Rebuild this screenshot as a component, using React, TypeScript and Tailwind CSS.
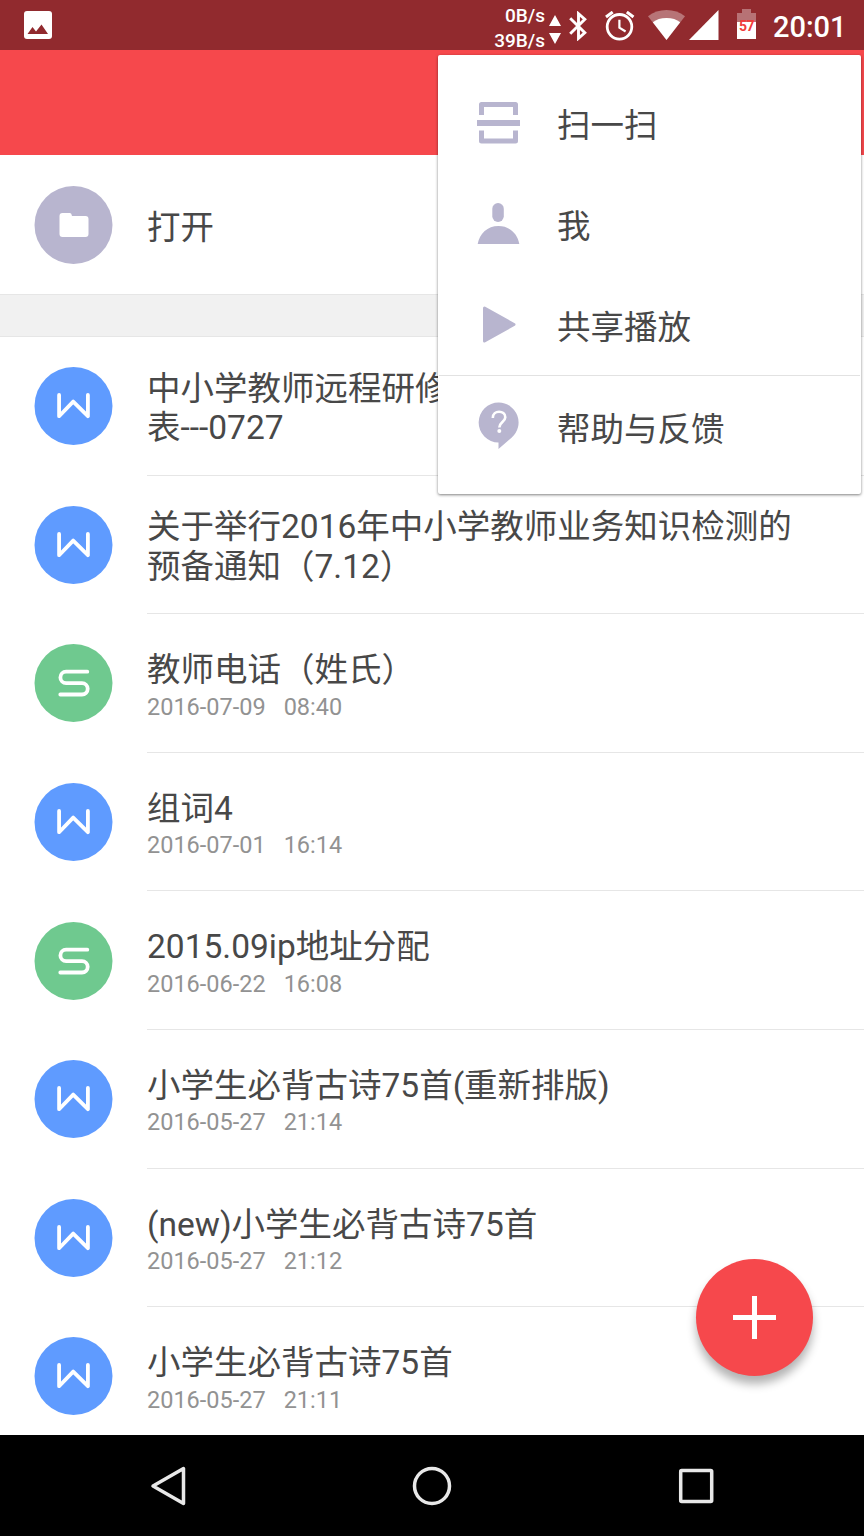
import React from "react";

type DocKind = "writer" | "sheet";

interface DocItem {
  kind: DocKind;
  title: string[];
  date?: string;
  time?: string;
}

const documents: DocItem[] = [
  { kind: "writer", title: ["中小学教师远程研修", "表---0727"] },
  {
    kind: "writer",
    title: ["关于举行2016年中小学教师业务知识检测的", "预备通知（7.12）"],
  },
  { kind: "sheet", title: ["教师电话（姓氏）"], date: "2016-07-09", time: "08:40" },
  { kind: "writer", title: ["组词4"], date: "2016-07-01", time: "16:14" },
  { kind: "sheet", title: ["2015.09ip地址分配"], date: "2016-06-22", time: "16:08" },
  { kind: "writer", title: ["小学生必背古诗75首(重新排版)"], date: "2016-05-27", time: "21:14" },
  { kind: "writer", title: ["(new)小学生必背古诗75首"], date: "2016-05-27", time: "21:12" },
  { kind: "writer", title: ["小学生必背古诗75首"], date: "2016-05-27", time: "21:11" },
];

const StatusBar: React.FC = () => (
  <div className="flex h-[50px] shrink-0 items-start bg-[#912a2e] text-white">
    <svg className="mt-[11px] ml-[24px] h-7 w-7" viewBox="0 0 28 28">
      <rect width="28" height="28" rx="3" fill="#fff" />
      <path d="M3.5 23 8.5 16l3.5 4.5 5.5-7L24 23z" fill="#912a2e" />
    </svg>
    <div className="ml-auto flex w-[60px] flex-col items-end pt-[3px] text-[19px] leading-[25px] font-medium">
      <span>0B/s</span>
      <span>39B/s</span>
    </div>
    <svg className="mt-[15px] ml-[4px] h-[29px] w-3" viewBox="0 0 12 29" fill="#fff">
      <path d="M0 11 6 0l6 11zM0 18h12L6 29z" />
    </svg>
    <svg className="mt-[11px] ml-[8px] h-[30px] w-[19px]" viewBox="0 0 19 30">
      <path
        d="M1.2 7.3 15.8 21.8 9.5 27.3V2.7l6.3 5.5L1.2 22.7"
        fill="none"
        stroke="#fff"
        strokeWidth="2.9"
      />
    </svg>
    <svg className="mt-[11px] ml-[17px] h-[30px] w-[30px]" viewBox="0 0 30 30" fill="none" stroke="#fff">
      <circle cx="14.5" cy="15.8" r="12.3" strokeWidth="2.8" />
      <path d="M1 6 7.7 1M28.5 6 21.8 1" strokeWidth="3" />
      <path d="M14.4 8.7v8l6.2 3.8" strokeWidth="2.2" />
    </svg>
    <svg className="mt-[10px] ml-[13px] h-[30px] w-[37px]" viewBox="0 0 37 30" fill="#fff">
      <path d="M18.5 30 0 6.3Q8 0 18.5 0T37 6.3z" opacity="0.35" />
      <path d="M18.5 30 4.8 12.3Q10 8 18.5 8t13.7 4.3z" />
    </svg>
    <svg className="mt-[10px] ml-[4px] h-[30px] w-[30px]" viewBox="0 0 30 30" fill="#fff">
      <path d="M0 30 29.5 0v30z" />
    </svg>
    <div className="mt-[9px] ml-[18px] flex w-[19px] flex-col items-center">
      <div className="h-[4px] w-[9px] bg-[#b77275]" />
      <div className="h-[9px] w-[19px] bg-[#b77275]" />
      <div className="flex h-[17px] w-[19px] justify-center bg-white text-[14px] leading-[8px] font-bold tracking-[-0.5px] text-[#f23c3c]">
        57
      </div>
    </div>
    <div className="mr-[18px] ml-[17px] w-[73px] text-right text-[29px] leading-[54px] font-medium whitespace-nowrap">
      20:01
    </div>
  </div>
);

const DocIcon: React.FC<{ kind: DocKind }> = ({ kind }) => (
  <svg
    className="ml-[34px] h-[78px] w-[79px] shrink-0"
    viewBox="-0.5 0 79 78"
    fill="none"
    stroke="#fff"
    strokeWidth="3.8"
    strokeLinecap="round"
    strokeLinejoin="round"
  >
    <circle cx="39" cy="39" r="39" fill={kind === "writer" ? "#5f9bff" : "#6fc98f"} stroke="none" />
    {kind === "writer" ? (
      <path d="M24.6 28V49.2L38.700 34.600 53.400 49.200V28" />
    ) : (
      <path d="M52.800 27.700H31.600a5.700 5.700 0 0 0 0 11.400H47.500a5.700 5.700 0 0 1 0 11.400H25.800" />
    )}
  </svg>
);

const DocRow: React.FC<{ doc: DocItem }> = ({ doc }) => (
  <li className="flex h-[138.6px] shrink-0 items-center">
    <DocIcon kind={doc.kind} />
    <div className="ml-[34px] flex h-full min-w-0 flex-1 flex-col justify-center border-b border-[#e6e6e6] pt-[5px]">
      {doc.title.map((line) => (
        <p key={line} className="text-[33.5px] leading-[39.4px] whitespace-nowrap">
          {line}
        </p>
      ))}
      {doc.date && (
        <p className="mt-[3px] flex gap-[18px] text-[23.5px] leading-7 text-[#929292]">
          <span>{doc.date}</span>
          <span>{doc.time}</span>
        </p>
      )}
    </div>
  </li>
);

const menuItems = [
  {
    label: "扫一扫",
    icon: (
      <g>
        <path d="M7.5 18V7.5h34V18M7.5 33.5V44h34V33.5" fill="none" stroke="#b8b5cf" strokeWidth="5" strokeLinejoin="round" />
        <path d="M3 23h43v6H3z" />
      </g>
    ),
  },
  {
    label: "我",
    icon: (
      <g>
        <rect x="18.3" y="5" width="11.5" height="19" rx="5.7" />
        <path d="M3.7 46C5.5 35.5 13.5 28 24.5 28S43.5 35.5 45.3 46z" />
      </g>
    ),
  },
  {
    label: "共享播放",
    icon: <path d="M10.5 9 40 25.5 10.5 42z" stroke="#b8b5cf" strokeWidth="3" strokeLinejoin="round" />,
  },
  {
    label: "帮助与反馈",
    icon: (
      <g>
        <path d="M24.8 2.500a20 20 0 0 1 13 35L24.500 49v-6.500A20 20 0 0 1 24.800 2.500z" />
        <path d="M18.800 18c0-8.500 12.500-8 12.500-.8 0 4.800-6 5-6 10.300" fill="none" stroke="#fff" strokeWidth="2.600" />
        <circle cx="25.300" cy="31" r="2" fill="#fff" />
      </g>
    ),
  },
];

const OverflowMenu: React.FC = () => (
  <div className="absolute top-[55px] left-[438px] h-[439px] w-[423px] rounded-[2px] bg-white pt-[17px] shadow-[0_1px_3px_rgba(0,0,0,0.5)]">
    {menuItems.map(({ label, icon }, i) => (
      <div
        key={label}
        className={`mx-px flex h-[101px] items-center ${i === 3 ? "border-t border-[#e2e2e2]" : ""}`}
      >
        <svg className="ml-[35px] h-[52px] w-[49px]" viewBox="0 0 49 52" fill="#b8b5cf">
          {icon}
        </svg>
        <span className="ml-[34px] pt-[7px] text-[33.5px] leading-[40px]">{label}</span>
      </div>
    ))}
  </div>
);

const NavBar: React.FC = () => (
  <div className="flex h-[101px] shrink-0 items-center justify-between bg-black px-[148px]">
    <svg className="h-[42px] w-[42px]" viewBox="0 0 42 42" fill="none" stroke="#e8e8e8" strokeWidth="3.5" strokeLinejoin="round">
      <path d="M5 21 35.5 3.5v35z" />
    </svg>
    <svg className="h-[42px] w-[42px]" viewBox="0 0 42 42" fill="none" stroke="#e8e8e8" strokeWidth="3.5">
      <circle cx="21" cy="21" r="17.5" />
    </svg>
    <svg className="h-[42px] w-[42px]" viewBox="0 0 42 42" fill="none" stroke="#e8e8e8" strokeWidth="3.5">
      <rect x="6.7" y="5.5" width="31" height="31" rx="1" />
    </svg>
  </div>
);

export default function App() {
  return (
    <div
      lang="zh-CN"
      className="relative flex h-[1536px] w-[864px] flex-col overflow-hidden bg-white font-[Roboto,'Noto_Sans_CJK_SC',sans-serif] text-[#484848]"
    >
      <StatusBar />
      <div className="h-[105px] shrink-0 bg-[#f6484c]" />

      {/* Open */}
      <div className="flex h-[139px] shrink-0 items-center">
        <svg className="ml-[34px] h-[78px] w-[79px]" viewBox="-0.5 0 79 78">
          <circle cx="39" cy="39" r="39" fill="#b8b5cf" />
          <path
            d="M28 27h7.5q1.5 0 2 3H51q3 0 3 3v15q0 3-3 3H28q-3 0-3-3V30q0-3 3-3z"
            fill="#fff"
          />
        </svg>
        <span className="ml-[34px] pt-[8px] text-[33.5px]">打开</span>
      </div>
      <div className="h-[43px] shrink-0 border-y border-[#e6e6e6] bg-[#f1f1f1]" />

      <ul className="flex min-h-0 flex-1 flex-col overflow-hidden">
        {documents.map((doc) => (
          <DocRow key={doc.title[0]} doc={doc} />
        ))}
      </ul>
      <NavBar />

      <OverflowMenu />

      <button className="absolute top-[1259px] left-[696px] flex h-[117px] w-[117px] items-center justify-center rounded-full bg-[#f6484c] shadow-[0_8px_10px_rgba(0,0,0,0.3)]">
        <svg className="h-[43px] w-[43px]" viewBox="0 0 43 43" stroke="#fff" strokeWidth="5">
          <path d="M0 21.5h43M21.5 0v43" />
        </svg>
      </button>
    </div>
  );
}
